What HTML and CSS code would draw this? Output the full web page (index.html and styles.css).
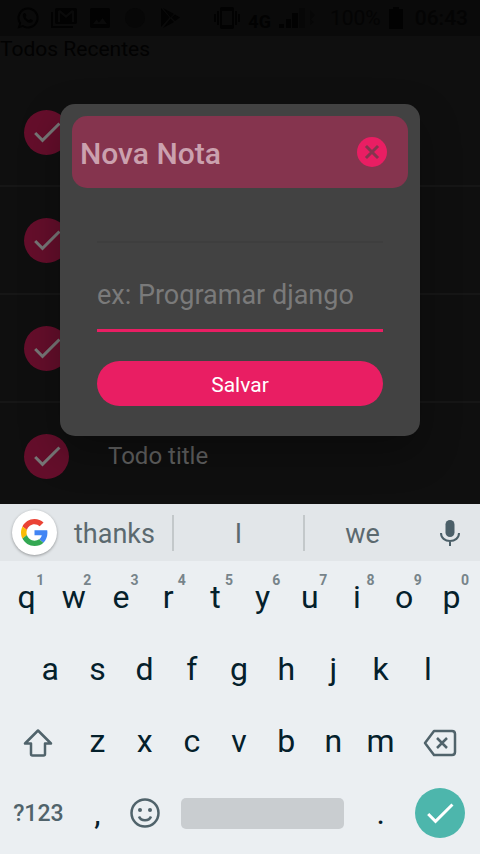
FILE: index.html
```html
<!DOCTYPE html>
<html lang="pt-BR">
<head>
<meta charset="utf-8">
<meta name="viewport" content="width=device-width, initial-scale=1">
<title>Todos Recentes</title>
<link rel="stylesheet" href="styles.css">
</head>
<body>
<svg class="defs" aria-hidden="true">
  <symbol id="check" viewBox="0 0 24 24"><path d="M9 16.17L4.83 12l-1.42 1.41L9 19 21 7l-1.41-1.41z"/></symbol>
</svg>
<div class="screen">
  <main class="app">
    <header class="status">
      <div class="status-group notices">
        <svg viewBox="0 0 24 24"><path fill-rule="evenodd" d="M12 1.5A10.4 10.4 0 0 0 3.2 17.500L1.500 22.500l5.200-1.500A10.500 10.500 0 1 0 12 1.500zM12 3.500a8.500 8.500 0 1 1-4.900 15.400l-2.800.8.900-2.700A8.500 8.500 0 0 1 12 3.500z"/><path d="M8.600 7c-.8 0-1.800 1-1.800 2.400 0 3 4.400 7.400 7.400 7.400 1.700 0 2.800-1.100 2.800-2.200 0-.5-2.200-1.600-2.600-1.600s-1 1.200-1.400 1.200c-.9-.2-3.200-2.300-3.500-3.300 0-.4.900-.9.900-1.400S9.300 7 8.600 7z"/></svg>
        <svg class="wide" viewBox="0 0 26 22"><path fill-rule="evenodd" d="M6 1h18a2 2 0 0 1 2 2v12a2 2 0 0 1-2 2H6a2 2 0 0 1-2-2V3a2 2 0 0 1 2-2zm1 3v11h2V6l6 5 6-5v9h2V4l-2-1-6 5-6-5z"/><path d="M0 5h2v14h20v2H0z"/></svg>
        <svg viewBox="0 0 24 24"><path d="M22 20V4a2 2 0 0 0-2-2H4a2 2 0 0 0-2 2v16c0 1.100.9 2 2 2h16a2 2 0 0 0 2-2zM8.500 13.500l2.500 3 3.500-4.500 4.500 6H5z"/></svg>
        <svg class="faint" viewBox="0 0 24 24"><circle cx="12" cy="12" r="10"/></svg>
        <svg viewBox="0 0 24 24"><path d="M3 2l8.500 9.500L3 21zM5 2l11 6-3.500 3.500zM5 22l11-6-3.500-3.500zM17 8.500l5 3-5 3.500-3.500-3.500z"/></svg>
      </div>
      <div class="status-group">
        <svg class="wide" viewBox="0 0 26 24"><path fill-rule="evenodd" d="M8 1h10a2 2 0 0 1 2 2v18a2 2 0 0 1-2 2H8a2 2 0 0 1-2-2V3a2 2 0 0 1 2-2zm0 4v14h10V5zM3 5h2v14H3zM0 8h2v8H0zM21 5h2v14h-2zM24 8h2v8h-2z"/></svg>
        <span class="network">4G</span>
        <svg class="signal" viewBox="0 0 43 22"><path d="M0 17h5v4H0zM7 12h5v9H7zM13 6h6v15h-6z"/><path class="faint" d="M20 1h6v20h-6zM31 3l5 5-5 5zM31 12l4 3-4 3z"/></svg>
        <span>100%</span>
        <svg class="battery" viewBox="0 0 18 22"><path d="M4 0h6v2h4v20H0V2h4z"/></svg>
        <span class="clock">06:43</span>
      </div>
    </header>
    <section class="page">
      <h1 class="page-title">Todos Recentes</h1>
      <ul class="todos">
        <li class="todo"><span class="badge"><svg><use href="#check"/></svg></span></li>
        <li class="todo"><span class="badge"><svg><use href="#check"/></svg></span></li>
        <li class="todo"><span class="badge"><svg><use href="#check"/></svg></span></li>
        <li class="todo"><span class="badge"><svg><use href="#check"/></svg></span><span>Todo title</span></li>
      </ul>
      <div class="overlay">
        <form class="dialog" role="dialog" aria-labelledby="dialog-title">
          <div class="dialog-head">
            <h2 id="dialog-title">Nova Nota</h2>
            <button class="close" type="button" aria-label="Fechar"><svg viewBox="0 0 30 30"><path d="M10 10l10 10M20 10L10 20"/></svg></button>
          </div>
          <div class="dialog-body">
            <hr>
            <input class="field" type="text" aria-label="Nota" placeholder="ex: Programar django">
            <button class="save" type="submit">Salvar</button>
          </div>
        </form>
      </div>
    </section>
  </main>
  <section class="keyboard" aria-label="Teclado">
    <div class="suggestions">
      <button class="google" aria-label="Google"><svg viewBox="0 0 48 48"><path fill="#ea4335" d="M24 9.500c3.540 0 6.710 1.220 9.210 3.600l6.850-6.850C35.900 2.380 30.470 0 24 0 14.620 0 6.510 5.380 2.560 13.220l7.980 6.190C12.430 13.720 17.740 9.500 24 9.500z"/><path fill="#4285f4" d="M46.980 24.550c0-1.570-.15-3.090-.38-4.550H24v9.020h12.940c-.58 2.960-2.260 5.480-4.780 7.180l7.730 6c4.510-4.180 7.090-10.360 7.090-17.650z"/><path fill="#fbbc05" d="M10.530 28.590c-.48-1.450-.76-2.990-.76-4.590s.27-3.140.76-4.590l-7.980-6.190C.92 16.460 0 20.120 0 24s.92 7.540 2.560 10.780z"/><path fill="#34a853" d="M24 48c6.480 0 11.930-2.130 15.890-5.810l-7.730-6c-2.150 1.450-4.920 2.300-8.160 2.300-6.260 0-11.570-4.220-13.470-9.910l-7.980 6.190C6.510 42.620 14.620 48 24 48z"/></svg></button>
      <button class="word">thanks</button>
      <button class="word">I</button>
      <button class="word">we</button>
      <button class="mic" aria-label="Voz"><svg viewBox="0 0 20 28"><rect x="5.500" y="1" width="9" height="17" rx="4.500"/><path d="M1 14c0 5 4 8 9 8s9-3 9-8M10 22v5"/></svg></button>
    </div>
    <div class="keys">
      <button class="key">q<small>1</small></button><button class="key">w<small>2</small></button><button class="key">e<small>3</small></button><button class="key">r<small>4</small></button><button class="key">t<small>5</small></button><button class="key">y<small>6</small></button><button class="key">u<small>7</small></button><button class="key">i<small>8</small></button><button class="key">o<small>9</small></button><button class="key">p<small>0</small></button>
      <button class="key inset">a</button><button class="key">s</button><button class="key">d</button><button class="key">f</button><button class="key">g</button><button class="key">h</button><button class="key">j</button><button class="key">k</button><button class="key">l</button>
      <button class="key big edit row-start" aria-label="Shift"><svg viewBox="0 0 30 30"><path d="M15 2.500L2 15.500h6V26q0 1.500 1.500 1.500h11q1.500 0 1.500-1.500V15.500h6z"/></svg></button><button class="key">z</button><button class="key">x</button><button class="key">c</button><button class="key">v</button><button class="key">b</button><button class="key">n</button><button class="key">m</button><button class="key big edit" aria-label="Apagar"><svg class="backspace" viewBox="0 0 34 28"><path d="M11 2h18q3 0 3 3v18q0 3-3 3H11L2 14zM14 9l10 10M24 9L14 19"/></svg></button>
      <button class="key big symbols">?123</button><button class="key">,</button><button class="key" aria-label="Emoji"><svg viewBox="0 0 30 30"><circle cx="15" cy="15" r="13.500"/><path d="M9 18.500c2 5 10 5 12 0"/><circle class="eye" cx="10" cy="12" r="2"/><circle class="eye" cx="20" cy="12" r="2"/></svg></button><button class="key space" aria-label="Espaço"><span></span></button><button class="key">.</button><button class="key big" aria-label="Concluir"><span class="done"><svg><use href="#check"/></svg></span></button>
    </div>
  </section>
</div>
</body>
</html>
```

FILE: styles.css
```css
* {
  box-sizing: border-box;
}

body {
  margin: 0;
  background: #0f0f0f;
  font-family: Roboto, "Liberation Sans", sans-serif;
}

button,
input {
  margin: 0;
  padding: 0;
  border: 0;
  background: none;
  color: inherit;
  font: inherit;
}

svg {
  display: block;
}

.defs {
  display: none;
}

.screen {
  display: flex;
  flex-direction: column;
  height: 100vh;
}

.app {
  display: flex;
  flex: 1;
  flex-direction: column;
  min-height: 0;
}

/* Status bar */
.status {
  display: flex;
  flex: none;
  align-items: center;
  justify-content: space-between;
  height: 36px;
  padding: 0 12px 0 16px;
  background: #0a0a0a;
  color: #020202;
  font-size: 21px;
}

.status svg {
  width: 24px;
  height: 24px;
  fill: currentColor;
}

.status .faint {
  fill: #070707;
}

.status .wide {
  width: 26px;
}

.status .signal {
  width: 43px;
  height: 22px;
}

.status .battery {
  width: 18px;
  height: 22px;
}

.status-group {
  display: flex;
  align-items: center;
  gap: 8px;
}

.notices {
  gap: 11px;
}

.status-group span {
  color: #040404;
}

.status-group .network {
  padding-top: 6px;
  color: #020202;
  font-size: 18px;
  font-weight: 700;
}

.status-group .clock {
  font-weight: 500;
}

/* Todo list */
.page {
  position: relative;
  flex: 1;
  min-height: 0;
  overflow: hidden;
}

.page-title {
  margin: 0 0 17px;
  color: #020202;
  font-size: 21px;
  font-weight: 400;
  line-height: 26px;
}

.todos {
  margin: 0;
  padding: 0;
  list-style: none;
}

.todo {
  display: flex;
  align-items: center;
  gap: 39px;
  height: 108px;
  padding: 0 24px;
  border-bottom: 2px solid #161616;
  color: #606060;
  font-size: 24px;
}

.badge {
  display: grid;
  place-items: center;
  width: 45px;
  height: 45px;
  border-radius: 50%;
  background: #650e2b;
}

.badge svg {
  width: 36px;
  height: 36px;
  fill: #777;
}

/* Dialog */
.overlay {
  position: absolute;
  inset: 0;
  display: grid;
  align-items: center;
  padding: 0 60px;
}

.dialog {
  padding: 12px 12px 30px;
  border-radius: 15px;
  background: #424242;
  box-shadow: 0 16px 40px rgba(0, 0, 0, 0.3);
}

.dialog-head {
  display: flex;
  align-items: center;
  justify-content: space-between;
  height: 72px;
  padding: 0 21px 0 8px;
  border-radius: 15px;
  background: #85344e;
}

.dialog-head h2 {
  margin: 0;
  padding-top: 3px;
  color: #cba1ae;
  font-size: 30px;
  font-weight: 500;
}

.close {
  width: 30px;
  height: 30px;
  border-radius: 50%;
  background: #e91e63;
}

.close svg {
  fill: none;
  stroke: #85344e;
  stroke-width: 3;
  stroke-linecap: square;
}

.dialog-body {
  display: flex;
  flex-direction: column;
  padding: 53px 25px 0;
}

.dialog-body hr {
  width: 100%;
  margin: 0 0 15px;
  border: 0;
  border-top: 2px solid #3e3e3e;
}

.field {
  width: 100%;
  height: 74px;
  margin-bottom: 29px;
  padding-top: 2px;
  border-bottom: 3px solid #e91e63;
  border-radius: 0;
  outline: 0;
  color: #fff;
  font-size: 27px;
}

.field::placeholder {
  color: #7a7a7a;
  opacity: 1;
}

.save {
  height: 45px;
  padding-top: 2px;
  border-radius: 23px;
  background: #e91e63;
  color: #fff;
  font-size: 21px;
}

/* Keyboard */
.keyboard {
  flex: none;
  padding-bottom: 5px;
  background: #ebeff2;
}

.suggestions {
  display: grid;
  grid-template-columns: 45px 117px 131px 1fr 60px;
  align-items: center;
  height: 57px;
  padding-left: 12px;
  background: #e2e6e9;
  color: #5b696f;
  font-size: 27px;
}

.google {
  display: grid;
  place-items: center;
  width: 45px;
  height: 45px;
  border-radius: 50%;
  background: #fff;
  box-shadow: 0 1px 3px rgba(0, 0, 0, 0.35);
}

.google svg {
  width: 27px;
  height: 27px;
}

.word {
  height: 36px;
  padding-top: 2px;
  border-right: 2px solid #c3c8ca;
}

.word:nth-child(4) {
  border: 0;
}

.mic svg {
  width: 20px;
  height: 28px;
  margin: 0 auto;
  fill: none;
  stroke: #4b5f68;
  stroke-width: 2;
}

.mic rect {
  fill: #4b5f68;
  stroke: none;
}

.keys {
  display: grid;
  grid-template-columns: repeat(20, 1fr);
  grid-auto-rows: 72px;
  padding: 0 5px 0 3px;
  color: #04202b;
  font-size: 32px;
}

.key {
  position: relative;
  display: grid;
  grid-column: span 2;
  place-items: center;
}

.key small {
  position: absolute;
  top: 11px;
  right: 6px;
  color: #77848a;
  font-size: 14px;
  font-weight: 700;
  line-height: 16px;
}

.inset {
  grid-column: 2 / span 2;
}

.big {
  grid-column: span 3;
}

.edit {
  padding-top: 3px;
}

.row-start {
  grid-column: 1 / span 3;
}

.symbols {
  color: #50636b;
  font-size: 23px;
  font-weight: 500;
}

.key svg {
  width: 30px;
  height: 30px;
  fill: none;
  stroke: #50636b;
  stroke-width: 2.5;
  stroke-linejoin: round;
}

.key .backspace {
  width: 34px;
  height: 28px;
}

.key .eye {
  fill: #50636b;
  stroke: none;
}

.space {
  grid-column: span 8;
  padding: 0 13px;
}

.space span {
  width: 100%;
  height: 31px;
  border-radius: 5px;
  background: #c9cdd0;
}

.done {
  display: grid;
  place-items: center;
  width: 50px;
  height: 50px;
  border-radius: 50%;
  background: #4db6ac;
}

.key .done svg {
  width: 36px;
  height: 36px;
  fill: #fff;
  stroke: none;
}
```
